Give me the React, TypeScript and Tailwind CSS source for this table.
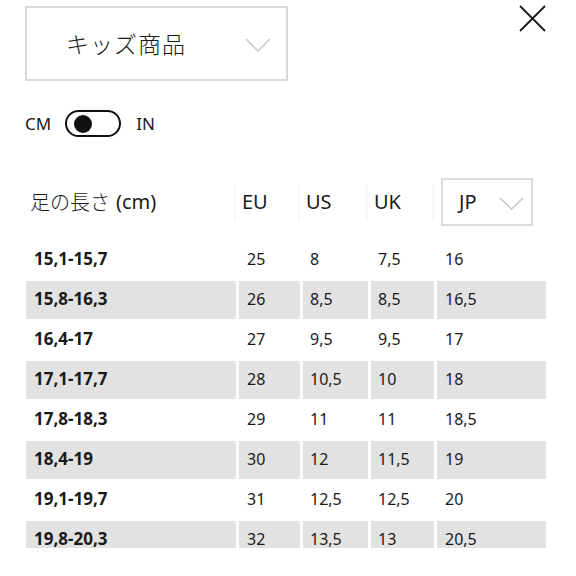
import React from "react";

const rows: [string, string, string, string, string][] = [
  ["15,1-15,7", "25", "8", "7,5", "16"],
  ["15,8-16,3", "26", "8,5", "8,5", "16,5"],
  ["16,4-17", "27", "9,5", "9,5", "17"],
  ["17,1-17,7", "28", "10,5", "10", "18"],
  ["17,8-18,3", "29", "11", "11", "18,5"],
  ["18,4-19", "30", "12", "11,5", "19"],
  ["19,1-19,7", "31", "12,5", "12,5", "20"],
  ["19,8-20,3", "32", "13,5", "13", "20,5"],
];

const sans = { fontFamily: '"Noto Sans", "Open Sans", "Noto Sans CJK JP", sans-serif' };
const jp = { fontFamily: '"Noto Sans CJK JP", "Noto Sans", sans-serif' };

function Chevron({ w, h }: { w: number; h: number }) {
  return (
    <svg width={w} height={h} viewBox={`0 0 ${w} ${h}`} fill="none">
      <path d={`M1 1 L${w / 2} ${h - 1} L${w - 1} 1`} stroke="#c4c4c4" strokeWidth="1.4" />
    </svg>
  );
}

export default function App() {
  return (
    <div className="w-[576px] h-[576px] bg-white overflow-hidden text-[#1a1a1a]" style={sans}>
      <div className="flex items-start">
        <div className="ml-[25px] mt-[6px] w-[263px] h-[75px] border-2 border-[#d9d9d9] flex items-center pl-[39px] pr-[15px]">
          <span className="text-[23px] font-light tracking-[1px]" style={jp}>キッズ商品</span>
          <span className="ml-auto mt-[2px]"><Chevron w={26} h={14} /></span>
        </div>
        <div className="ml-auto mr-[30px] mt-[5px]">
          <svg width="27" height="27" viewBox="0 0 27 27">
            <path d="M1 1 L26 26 M26 1 L1 26" stroke="#1a1a1a" strokeWidth="1.8" />
          </svg>
        </div>
      </div>

      <div className="flex items-center mt-[29px] ml-[25px] h-[27px]">
        <span className="text-[17px]">CM</span>
        <div className="ml-[14px] w-[56px] h-[27px] rounded-full border-2 border-[#111] flex items-center pl-[7px]">
          <div className="w-[18px] h-[18px] rounded-full bg-[#111]" />
        </div>
        <span className="ml-[15px] text-[17px]">IN</span>
      </div>

      <div className="mt-[41px] ml-[26px] h-[370px] overflow-hidden">
        <div className="grid grid-cols-[210px_61px_65px_63px_109px] gap-x-[3px] gap-y-[2px]">
          <div className="h-[48px] flex items-center">
            <div className="w-full h-[36px] flex items-center pl-[4px] border-r-2 border-[#f6f6f6]">
              <span className="text-[20px] font-light" style={jp}>足の長さ</span>
              <span className="text-[20px] ml-[6px]">(cm)</span>
            </div>
          </div>
          {["EU", "US", "UK"].map((h) => (
            <div key={h} className="h-[48px] flex items-center">
              <div className="w-full h-[36px] flex items-center pl-[3px] border-r-2 border-[#f6f6f6] text-[20px]">
                {h}
              </div>
            </div>
          ))}
          <div className="h-[48px] pl-[4px] pr-[13px]">
            <div className="h-[48px] border-2 border-[#dcdcdc] flex items-center pl-[16px] pr-[7px]">
              <span className="text-[20px]">JP</span>
              <span className="ml-auto mt-[2px]"><Chevron w={25} h={13} /></span>
            </div>
          </div>
          <div className="col-span-5 h-[11px]" />
          {rows.map((r, i) => {
            const bg = i % 2 === 1 ? "bg-[#e2e2e2]" : "bg-white";
            return (
              <React.Fragment key={i}>
                <div className={`${bg} h-[38px] flex items-center pl-[8px] pb-[3px] text-[17px] leading-[20px] font-bold`}>{r[0]}</div>
                <div className={`${bg} h-[38px] flex items-center pl-[8px] pb-[3px] text-[16px] leading-[20px]`}>{r[1]}</div>
                <div className={`${bg} h-[38px] flex items-center pl-[7px] pb-[3px] text-[16px] leading-[20px]`}>{r[2]}</div>
                <div className={`${bg} h-[38px] flex items-center pl-[7px] pb-[3px] text-[16px] leading-[20px]`}>{r[3]}</div>
                <div className={`${bg} h-[38px] flex items-center pl-[8px] pb-[3px] text-[16px] leading-[20px]`}>{r[4]}</div>
              </React.Fragment>
            );
          })}
        </div>
      </div>
    </div>
  );
}
